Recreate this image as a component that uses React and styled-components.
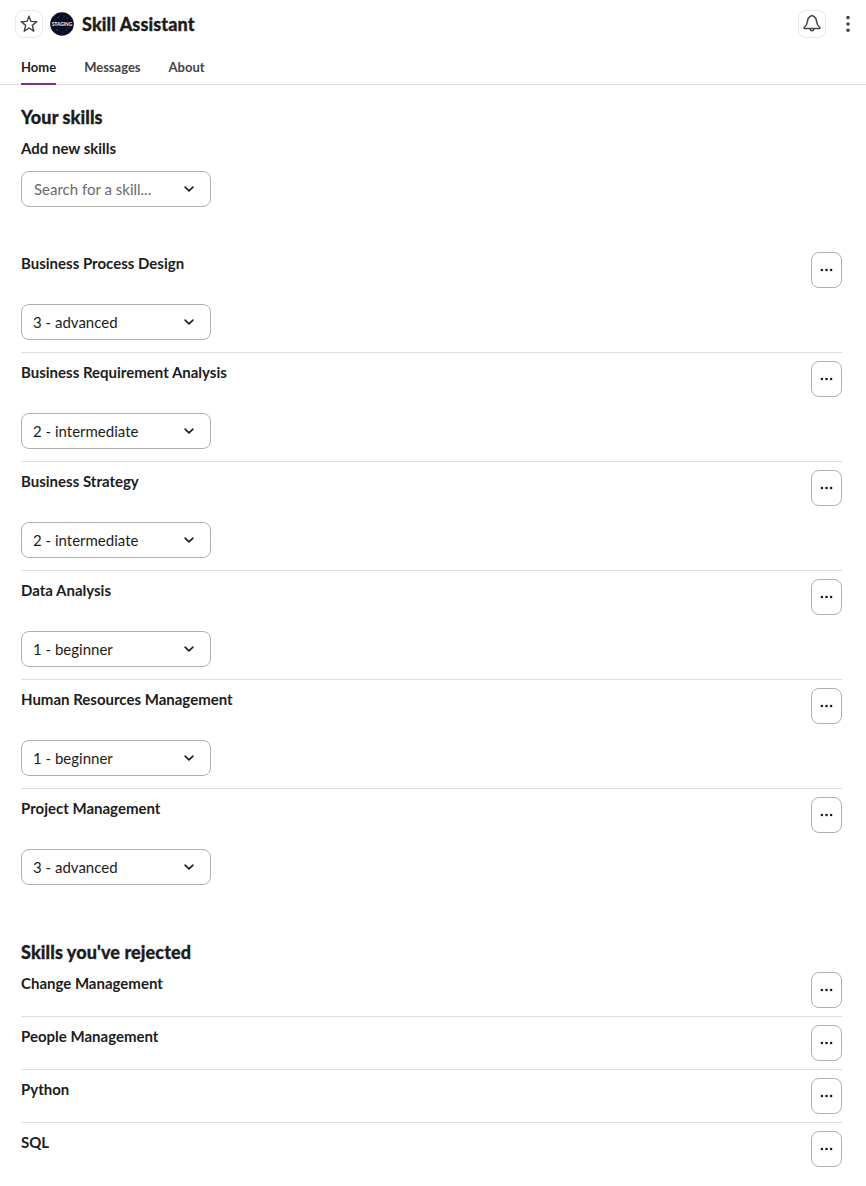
import React, { useState } from "react";
import styled, { createGlobalStyle } from "styled-components";

const GlobalStyle = createGlobalStyle`
  *, *::before, *::after {
    box-sizing: border-box;
  }

  body {
    margin: 0;
    background: #fff;
    color: #1d1c1d;
    font-family: Lato, "Liberation Sans", sans-serif;
    font-size: 15px;
    line-height: 22px;
  }
`;

const Page = styled.div`
  min-height: 1186px;
`;

const Header = styled.header`
  display: flex;
  align-items: center;
  height: 48px;
  padding: 0 9px 0 15px;
`;

const IconButton = styled.button`
  display: flex;
  align-items: center;
  justify-content: center;
  width: 28px;
  height: 28px;
  padding: 0;
  background: #fff;
  border: 1px solid #e8e8e8;
  border-radius: 8px;
  color: #454447;
`;

const MenuButton = styled(IconButton)`
  width: 18px;
  margin-left: 13px;
  border: none;
`;

const Avatar = styled.svg`
  margin: 0 8px 0 7px;
`;

const AppName = styled.h1`
  flex: 1;
  margin: 0;
  font-size: 18px;
  font-weight: 900;
  line-height: 24px;
  letter-spacing: 0.09px;
  -webkit-text-stroke: 0.3px currentColor;
`;

const Tabs = styled.nav`
  display: flex;
  gap: 28px;
  height: 37px;
  padding-left: 21px;
  border-bottom: 1px solid #dddddd;
`;

const Tab = styled.button`
  height: 37px;
  padding: 3px 0 0;
  background: none;
  border: none;
  border-bottom: 2px solid ${props => (props.$active ? "#7c3085" : "transparent")};
  color: ${props => (props.$active ? "#1d1c1d" : "#454447")};
  font: 700 13px/20px Lato, "Liberation Sans", sans-serif;
`;

const Content = styled.main`
  padding: 20px 24px 0 21px;
`;

const Section = styled.section`
  margin-bottom: ${props => props.$space || 0}px;
`;

const SectionTitle = styled.h2`
  margin: 0;
  font-size: 18px;
  font-weight: 900;
  line-height: 24px;
  letter-spacing: 0.09px;
  -webkit-text-stroke: 0.3px currentColor;
`;

const Label = styled.h3`
  margin: 0;
  font-size: 15px;
  font-weight: 700;
  line-height: 22px;
`;

const SearchLabel = styled(Label)`
  margin: 8px 0 12px;
`;

const Select = styled.button`
  display: flex;
  align-items: center;
  justify-content: space-between;
  width: 190px;
  height: 36px;
  padding: 0 14px 0 ${props => (props.$placeholder ? 12 : 11)}px;
  background: #fff;
  border: 1px solid #b0b0b0;
  border-radius: 8px;
  color: ${props => (props.$placeholder ? "#6b6a6b" : "#1d1c1d")};
  font: 400 15px/22px Lato, "Liberation Sans", sans-serif;
`;

const Row = styled.li`
  padding: 8px 0 ${props => (props.$rated ? 12 : 8)}px;

  & + & {
    border-top: 1px solid #dddddd;
  }
`;

const List = styled.ul`
  margin: 0;
  padding: 0;
  list-style: none;
`;

const RowTop = styled.div`
  display: flex;
  align-items: flex-start;
  justify-content: space-between;
  margin-bottom: ${props => (props.$rated ? 16 : 0)}px;
`;

const MoreButton = styled.button`
  display: flex;
  align-items: center;
  justify-content: center;
  width: 31px;
  height: 36px;
  padding: 0 0 1px;
  background: #fff;
  border: 1px solid #b0b0b0;
  border-radius: 8px;
  color: #1d1c1d;
`;

const skills = [
  { name: "Business Process Design", level: "3 - advanced" },
  { name: "Business Requirement Analysis", level: "2 - intermediate" },
  { name: "Business Strategy", level: "2 - intermediate" },
  { name: "Data Analysis", level: "1 - beginner" },
  { name: "Human Resources Management", level: "1 - beginner" },
  { name: "Project Management", level: "3 - advanced" }
];

const rejected = ["Change Management", "People Management", "Python", "SQL"];

const StarIcon = () => (
  <svg width="20" height="20" viewBox="0 0 20 20" fill="none">
    <path
      d="M10 2.2 12 7.4 17.8 7.7 13.3 11.4 14.8 17.2 10 14 5.2 17.2 6.7 11.4 2.2 7.7 8 7.4Z"
      stroke="currentColor"
      strokeWidth="1.4"
      strokeLinejoin="round"
    />
  </svg>
);

const BellIcon = () => (
  <svg width="20" height="20" viewBox="0 0 20 20" fill="none">
    <path
      d="M10 1.5C7.3 2.4 5.7 4.4 5.4 7.5C5.1 10.3 4.1 12 2.2 13.4V14.4H17.8V13.4C15.9 12 14.9 10.3 14.6 7.5C14.3 4.4 12.7 2.4 10 1.5Z"
      stroke="currentColor"
      strokeWidth="1.5"
      strokeLinejoin="round"
    />
    <path
      d="M8 14.8C8.2 16.2 8.9 16.8 10 16.8S11.8 16.2 12 14.8"
      stroke="currentColor"
      strokeWidth="1.5"
    />
  </svg>
);

const KebabIcon = () => (
  <svg width="6" height="20" viewBox="0 0 6 20" fill="currentColor">
    <circle cx="3" cy="3.6" r="1.8" />
    <circle cx="3" cy="10" r="1.8" />
    <circle cx="3" cy="16.2" r="1.8" />
  </svg>
);

const ChevronIcon = () => (
  <svg width="14" height="14" viewBox="0 0 14 14" fill="none">
    <path
      d="M3.1 5.1 7 8.8 10.9 5.1"
      stroke="#1d1c1d"
      strokeWidth="1.6"
      strokeLinecap="round"
      strokeLinejoin="round"
    />
  </svg>
);

const DotsIcon = () => (
  <svg width="13" height="4" viewBox="0 0 13 4" fill="currentColor">
    <circle cx="1.9" cy="2" r="1.3" />
    <circle cx="6.5" cy="2" r="1.3" />
    <circle cx="11.1" cy="2" r="1.3" />
  </svg>
);

// round night-sky logo with the environment name on it
const Logo = () => (
  <Avatar width="24" height="24" viewBox="0 0 24 24">
    <circle cx="12" cy="12" r="11.8" fill="#0b0d24" />
    <g fill="#2d6a86">
      <circle cx="8" cy="5" r="0.6" />
      <circle cx="14" cy="4" r="0.5" />
      <circle cx="17" cy="6.5" r="0.6" />
      <circle cx="5" cy="8" r="0.5" />
      <circle cx="7" cy="18" r="0.7" />
      <circle cx="12" cy="20" r="0.5" />
      <circle cx="16.5" cy="17.5" r="0.6" />
      <circle cx="19" cy="16" r="0.5" />
    </g>
    <text
      x="12"
      y="13.7"
      textAnchor="middle"
      textLength="20"
      fill="#eceef2"
      fontSize="4.6"
      fontWeight="900"
    >
      STAGING
    </text>
  </Avatar>
);

const SkillRow = ({ name, level }) => (
  <Row $rated={!!level}>
    <RowTop $rated={!!level}>
      <Label>{name}</Label>
      <MoreButton aria-label={`More actions for ${name}`}>
        <DotsIcon />
      </MoreButton>
    </RowTop>
    {level && (
      <Select>
        {level}
        <ChevronIcon />
      </Select>
    )}
  </Row>
);

const App = () => {
  const [tab, setTab] = useState("Home");

  return (
    <Page>
      <GlobalStyle />
      <Header>
        <IconButton aria-label="Star">
          <StarIcon />
        </IconButton>
        <Logo />
        <AppName>Skill Assistant</AppName>
        <IconButton aria-label="Notifications">
          <BellIcon />
        </IconButton>
        <MenuButton aria-label="More">
          <KebabIcon />
        </MenuButton>
      </Header>
      <Tabs>
        {["Home", "Messages", "About"].map(name => (
          <Tab key={name} $active={tab === name} onClick={() => setTab(name)}>
            {name}
          </Tab>
        ))}
      </Tabs>
      <Content>
        <Section $space={37}>
          <SectionTitle>Your skills</SectionTitle>
          <SearchLabel>Add new skills</SearchLabel>
          <Select $placeholder>
            Search for a skill...
            <ChevronIcon />
          </Select>
        </Section>
        <Section $space={43}>
          <List>
            {skills.map(skill => (
              <SkillRow key={skill.name} {...skill} />
            ))}
          </List>
        </Section>
        <Section>
          <SectionTitle>Skills you've rejected</SectionTitle>
          <List>
            {rejected.map(name => (
              <SkillRow key={name} name={name} />
            ))}
          </List>
        </Section>
      </Content>
    </Page>
  );
};

export default App;
